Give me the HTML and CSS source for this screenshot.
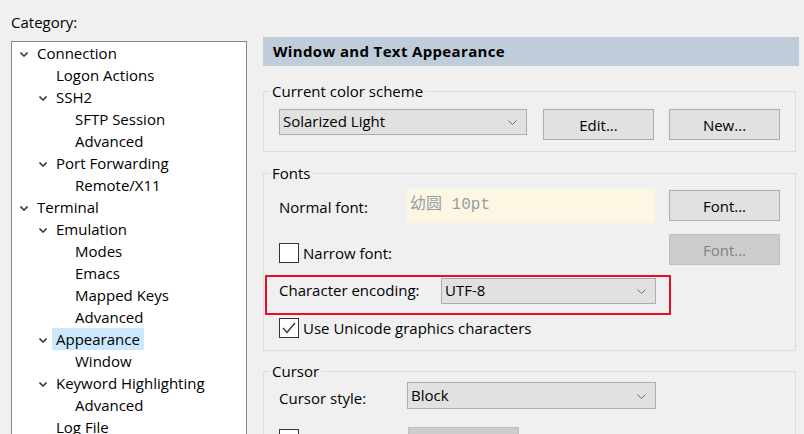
FILE: index.html
```html
<!DOCTYPE html>
<html>
<head>
<meta charset="utf-8">
<link rel="stylesheet" href="styles.css">
</head>
<body>
<div class="dialog">
  <div class="left">
    <div class="cat-label">Category:</div>
    <div class="tree">
      <div class="row l0"><span class="chev"><svg width="8" height="5" viewBox="0 0 8 5"><polyline points="0.5,0.5 4,4 7.5,0.5"/></svg></span><span class="txt">Connection</span></div>
      <div class="row l1"><span class="chev"></span><span class="txt">Logon Actions</span></div>
      <div class="row l1"><span class="chev"><svg width="8" height="5" viewBox="0 0 8 5"><polyline points="0.5,0.5 4,4 7.5,0.5"/></svg></span><span class="txt">SSH2</span></div>
      <div class="row l2"><span class="chev"></span><span class="txt">SFTP Session</span></div>
      <div class="row l2"><span class="chev"></span><span class="txt">Advanced</span></div>
      <div class="row l1"><span class="chev"><svg width="8" height="5" viewBox="0 0 8 5"><polyline points="0.5,0.5 4,4 7.5,0.5"/></svg></span><span class="txt">Port Forwarding</span></div>
      <div class="row l2"><span class="chev"></span><span class="txt">Remote/X11</span></div>
      <div class="row l0"><span class="chev"><svg width="8" height="5" viewBox="0 0 8 5"><polyline points="0.5,0.5 4,4 7.5,0.5"/></svg></span><span class="txt">Terminal</span></div>
      <div class="row l1"><span class="chev"><svg width="8" height="5" viewBox="0 0 8 5"><polyline points="0.5,0.5 4,4 7.5,0.5"/></svg></span><span class="txt">Emulation</span></div>
      <div class="row l2"><span class="chev"></span><span class="txt">Modes</span></div>
      <div class="row l2"><span class="chev"></span><span class="txt">Emacs</span></div>
      <div class="row l2"><span class="chev"></span><span class="txt">Mapped Keys</span></div>
      <div class="row l2"><span class="chev"></span><span class="txt">Advanced</span></div>
      <div class="row l1"><span class="chev"><svg width="8" height="5" viewBox="0 0 8 5"><polyline points="0.5,0.5 4,4 7.5,0.5"/></svg></span><span class="txt selected">Appearance</span></div>
      <div class="row l2"><span class="chev"></span><span class="txt">Window</span></div>
      <div class="row l1"><span class="chev"><svg width="8" height="5" viewBox="0 0 8 5"><polyline points="0.5,0.5 4,4 7.5,0.5"/></svg></span><span class="txt">Keyword Highlighting</span></div>
      <div class="row l2"><span class="chev"></span><span class="txt">Advanced</span></div>
      <div class="row l1"><span class="chev"></span><span class="txt">Log File</span></div>
    </div>
  </div>

  <div class="right">
    <div class="header">Window and Text Appearance</div>

    <fieldset class="group g-scheme">
      <legend>Current color scheme</legend>
      <div class="gbody body-scheme">
        <div class="line">
          <div class="combo w-scheme"><span class="val">Solarized Light</span><svg class="arrow" width="9" height="5" viewBox="0 0 9 5"><polyline points="0.5,0.5 4.5,4.5 8.5,0.5"/></svg></div>
          <button class="btn b-edit">Edit...</button>
          <button class="btn b-new">New...</button>
        </div>
      </div>
    </fieldset>

    <fieldset class="group g-fonts">
      <legend>Fonts</legend>
      <div class="gbody body-fonts">
        <div class="line r-normal">
          <span class="lbl lbl-normal">Normal font:</span>
          <div class="preview">幼圆 10pt</div>
          <button class="btn b-font">Font...</button>
        </div>
        <div class="line r-narrow">
          <label class="check c-narrow"><span class="box"></span><span>Narrow font:</span></label>
          <button class="btn b-font disabled">Font...</button>
        </div>
        <div class="redbox">
          <span class="lbl lbl-enc">Character encoding:</span>
          <div class="combo w-enc"><span class="val">UTF-8</span><svg class="arrow" width="9" height="5" viewBox="0 0 9 5"><polyline points="0.5,0.5 4.5,4.5 8.5,0.5"/></svg></div>
        </div>
        <label class="check c-unicode"><span class="box checked"><svg width="16" height="14" viewBox="0 0 16 14"><polyline points="2,7 6,11.5 14,2"/></svg></span><span>Use Unicode graphics characters</span></label>
      </div>
    </fieldset>

    <fieldset class="group g-cursor">
      <legend>Cursor</legend>
      <div class="gbody body-cursor">
        <div class="line r-cstyle">
          <span class="lbl lbl-cstyle">Cursor style:</span>
          <div class="combo w-cursor"><span class="val">Block</span><svg class="arrow" width="9" height="5" viewBox="0 0 9 5"><polyline points="0.5,0.5 4.5,4.5 8.5,0.5"/></svg></div>
        </div>
        <div class="line r-color">
          <label class="check c-color"><span class="box"></span><span class="lbl-color">Use color</span></label>
          <button class="btn b-color disabled">Color...</button>
        </div>
      </div>
    </fieldset>
  </div>
</div>
</body>
</html>
```

FILE: styles.css
```css
html, body {
  margin: 0;
  padding: 0;
}
body {
  background: #f0f0f0;
  font-family: "Open Sans", "Noto Sans", "Noto Sans CJK SC", sans-serif;
  font-size: 15px;
  color: #000;
  width: 804px;
  height: 434px;
  overflow: hidden;
}
.dialog {
  display: flex;
  align-items: flex-start;
}

/* ---- left: category tree ---- */
.left {
  width: 236px;
  padding: 12px 0 0 11px;
  flex: none;
}
.cat-label {
  line-height: 20px;
  height: 20px;
}
.tree {
  margin-top: 9px;
  width: 236px;
  height: 420px;
  box-sizing: border-box;
  border: 1px solid #828790;
  background: #fff;
  padding: 0 0 0 8px;
}
.row {
  display: flex;
  align-items: center;
  height: 22px;
  line-height: 22px;
  white-space: nowrap;
}
.row.l1 { padding-left: 19px; }
.row.l2 { padding-left: 38px; }
.chev {
  width: 17px;
  flex: none;
  display: flex;
  align-items: center;
  height: 22px;
}
.chev svg {
  fill: none;
  stroke: #3c3c3c;
  stroke-width: 1.6;
  margin-top: 2px;
}
.txt.selected {
  background: #cce8ff;
  padding: 0 4px;
  margin-left: -4px;
}

/* ---- right panel ---- */
.right {
  margin-left: 16px;
  width: 536px;
  padding-top: 37px;
  flex: none;
}
.header {
  height: 29px;
  line-height: 28px;
  background: #bfcddb;
  font-weight: bold;
  letter-spacing: 0.35px;
  padding-left: 10px;
}
.group {
  margin: 0;
  padding: 0;
  width: 533px;
  box-sizing: border-box;
  border: 1px solid #dcdcdc;
  min-width: 0;
}
.group legend {
  padding: 0 2px;
  margin-left: 6px;
  line-height: 20px;
  height: 20px;
}
.g-scheme { margin-top: 15px; }
.g-fonts { margin-top: 11px; }
.g-cursor { margin-top: 10px; }

.gbody {
  padding-left: 15px;
  padding-right: 15px;
}
.body-scheme { padding-top: 8px; padding-bottom: 11px; }
.body-fonts { padding-top: 6px; padding-bottom: 12px; }
.body-cursor { padding-top: 1px; padding-bottom: 20px; }

.line {
  display: flex;
  align-items: flex-start;
}

.combo {
  box-sizing: border-box;
  height: 26px;
  border: 1px solid #adadad;
  background: #e1e1e1;
  display: flex;
  align-items: center;
  justify-content: space-between;
  padding: 0 9px 0 3px;
}
.combo .val { line-height: 22px; margin-top: -2px; }
.combo .arrow {
  fill: none;
  stroke: #6d6d6d;
  stroke-width: 1;
  margin-top: 1px;
}
.w-scheme { width: 248px; }
.w-enc { width: 215px; }
.w-cursor { width: 249px; height: 27px; }

.btn {
  box-sizing: border-box;
  width: 111px;
  height: 31px;
  border: 1px solid #adadad;
  background: #e1e1e1;
  font-family: inherit;
  font-size: 15px;
  color: #000;
  padding: 0;
  margin: 0;
}
.btn.disabled {
  background: #cccccc;
  border-color: #bfbfbf;
  color: #838383;
}
.b-edit { margin-left: 16px; }
.b-new { margin-left: 15px; }

.lbl { line-height: 20px; }
.lbl-normal { width: 128px; flex: none; margin-top: 8px; }
.preview {
  width: 248px;
  height: 34px;
  box-sizing: border-box;
  background: #fdf6e3;
  color: #93a1a1;
  font-family: "Liberation Mono", "Noto Sans CJK SC", monospace;
  font-size: 16px;
  line-height: 32px;
  padding-left: 3px;
  flex: none;
}
.b-font { margin-left: 14px; margin-top: 1px; }

.r-normal { height: 34px; }
.r-narrow {
  margin-top: 10px;
  justify-content: space-between;
  padding-right: 0;
}
.check {
  display: flex;
  align-items: center;
  line-height: 20px;
}
.box {
  box-sizing: border-box;
  width: 20px;
  height: 20px;
  border: 1px solid #333;
  background: #fff;
  margin-right: 4px;
  flex: none;
  display: flex;
  align-items: center;
  justify-content: center;
}
.box svg {
  fill: none;
  stroke: #333;
  stroke-width: 1.4;
}
.c-narrow { margin-top: 10px; }

.redbox {
  margin-top: 10px;
  margin-left: -14px;
  width: 406px;
  height: 40px;
  box-sizing: border-box;
  border: 2px solid #e81123;
  padding: 1px 0 0 12px;
  display: flex;
  align-items: flex-start;
}
.lbl-enc { width: 162px; flex: none; margin-top: 2px; }

.c-unicode { margin-top: 3px; }

.r-cstyle { height: 27px; }
.lbl-cstyle { width: 128px; flex: none; margin-top: 6px; }
.r-color { margin-top: 18px; }
.c-color { margin-top: 2px; }
.lbl-color { width: 105px; }
.b-color { width: 111px; }
```
